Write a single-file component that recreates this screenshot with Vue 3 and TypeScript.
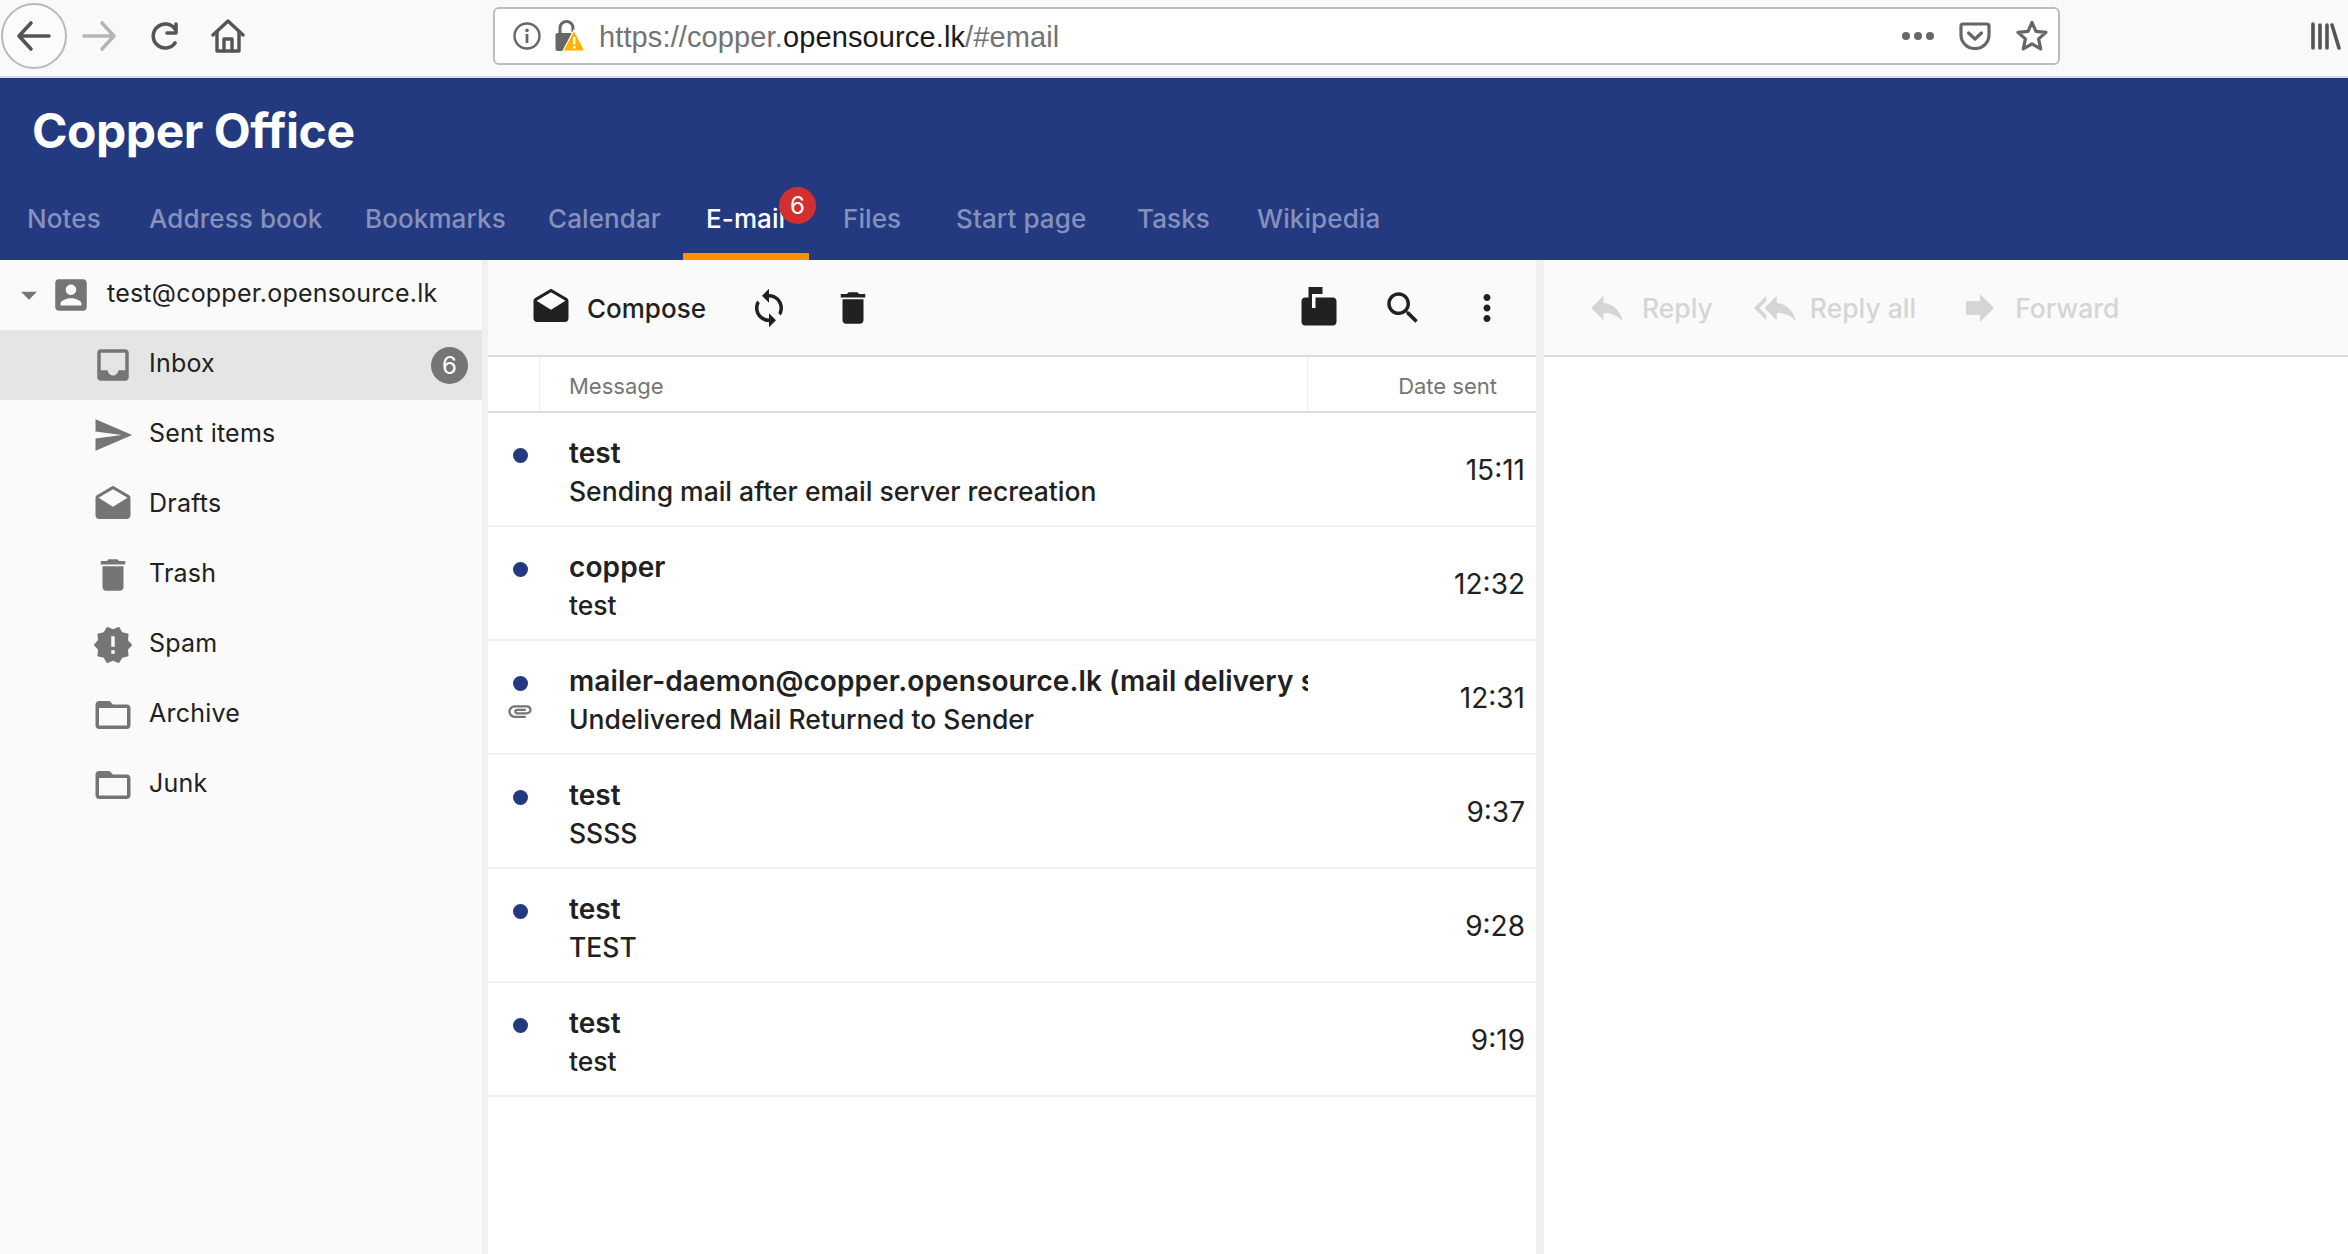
<template>
  <div class="page">
    <!-- browser chrome -->
    <div class="browser-bar">
      <button class="back-btn">
        <svg width="36" height="32" viewBox="0 0 36 32" fill="none" stroke="#555" stroke-width="3.6" stroke-linecap="round" stroke-linejoin="round">
          <path d="M33 16H3M15 3L3 16l12 13" />
        </svg>
      </button>
      <svg class="fwd" width="36" height="32" viewBox="0 0 36 32" fill="none" stroke="#b5b5b5" stroke-width="3.6" stroke-linecap="round" stroke-linejoin="round">
        <path d="M3 16h30M21 3l12 13-12 13" />
      </svg>
      <svg class="reload" width="32" height="28" viewBox="0 0 32 28" fill="none" stroke="#555" stroke-width="3.6" stroke-linecap="round" stroke-linejoin="round">
        <path d="M26 21a12 12 0 1 1 0-14" />
        <path d="M27 2v9h-9" />
      </svg>
      <svg class="home" width="34" height="34" viewBox="0 0 34 34" fill="none" stroke="#555" stroke-width="3.4" stroke-linecap="round" stroke-linejoin="round">
        <path d="M2 16L17 2l15 14" />
        <path d="M6 13v19h22V13" />
        <path d="M13 32V20h8v12" />
      </svg>
      <div class="url-box">
        <svg class="info" width="28" height="28" viewBox="0 0 28 28">
          <circle cx="14" cy="14" r="12.5" fill="none" stroke="#666" stroke-width="2.4" />
          <rect x="12.6" y="12" width="2.8" height="9" fill="#666" />
          <circle cx="14" cy="8.4" r="1.8" fill="#666" />
        </svg>
        <svg class="lock" width="30" height="32" viewBox="0 0 30 32">
          <path d="M5 13V8a6.5 6.5 0 0 1 13 0v4" fill="none" stroke="#666" stroke-width="3" />
          <rect x="0.5" y="13" width="19" height="18" rx="2" fill="#666" />
          <path d="M19 10L30 31H8z" fill="#ffb300" stroke="#fff" stroke-width="1.2" />
          <rect x="18" y="17" width="2.4" height="7.5" fill="#fff" />
          <rect x="18" y="26" width="2.4" height="2.4" fill="#fff" />
        </svg>
        <div class="url-text">https://copper.<span>opensource.lk</span>/#email</div>
        <div class="url-actions">
          <svg width="32" height="10" viewBox="0 0 32 10" fill="#666">
            <circle cx="4" cy="5" r="4" /><circle cx="16" cy="5" r="4" /><circle cx="28" cy="5" r="4" />
          </svg>
          <svg width="32" height="28" viewBox="0 0 32 28" fill="none" stroke="#666" stroke-width="3.2" stroke-linecap="round" stroke-linejoin="round">
            <path d="M4 2h24a2 2 0 0 1 2 2v9a14 13.5 0 0 1-28 0V4a2 2 0 0 1 2-2z" />
            <path d="M9.5 11l6.5 6 6.500-6" />
          </svg>
          <svg width="32" height="32" viewBox="0 0 32 32" fill="none" stroke="#666" stroke-width="3.2" stroke-linejoin="round">
            <path d="M16 2.500l4 8.800 10 1.100-7.400 6.500 2.100 10-8.700-5.100-8.700 5.100 2.100-10L2 12.400l10-1.100z" />
          </svg>
        </div>
      </div>
      <svg class="library" width="30" height="28" viewBox="0 0 30 28" fill="none" stroke="#555" stroke-width="3.6" stroke-linecap="round">
        <path d="M2 2v24M9 3v23M16 3v23M21 3l7 23" />
      </svg>
    </div>

    <!-- app header -->
    <header class="app-header">
      <h1>Copper Office</h1>
      <nav class="tabs">
        <a
          v-for="tab in tabs"
          :key="tab.label"
          class="tab"
          :class="{ active: tab.label === 'E-mail' }"
          :style="{ width: tab.width + 'px' }"
        >
          {{ tab.label }}
          <span v-if="tab.label === 'E-mail'" class="tab-badge">6</span>
        </a>
      </nav>
    </header>

    <div class="workspace">
      <!-- folders -->
      <aside class="sidebar">
        <div class="account">
          <svg class="caret" width="38" height="38" viewBox="0 0 24 24"><path d="M7 10l5 5 5-5z" /></svg>
          <svg class="folder-icon" viewBox="0 0 24 24"><path :d="icons.account" /></svg>
          <span>test@copper.opensource.lk</span>
        </div>
        <div
          v-for="folder in folders"
          :key="folder.name"
          class="folder"
          :class="{ selected: folder.name === 'Inbox' }"
        >
          <svg class="folder-icon" viewBox="0 0 24 24"><path :d="folder.icon" /></svg>
          <span>{{ folder.name }}</span>
          <span v-if="folder.name === 'Inbox'" class="count">6</span>
        </div>
      </aside>

      <!-- message list -->
      <section class="list-pane">
        <div class="toolbar">
          <svg class="tool-icon compose-icon" viewBox="0 0 24 24"><path :d="icons.drafts" /></svg>
          <span class="compose">Compose</span>
          <svg class="tool-icon sync-icon" viewBox="0 0 24 24"><path :d="icons.sync" /></svg>
          <svg class="tool-icon trash-icon" viewBox="0 0 24 24"><path :d="icons.trash" /></svg>
          <svg class="tool-icon mailbox-icon" viewBox="0 0 24 24"><path :d="icons.mailbox" /></svg>
          <svg class="tool-icon search-icon" viewBox="0 0 24 24"><path :d="icons.search" /></svg>
          <svg class="tool-icon more-icon" viewBox="0 0 24 24"><path :d="icons.more" /></svg>
        </div>
        <div class="list-head">
          <div class="col-flag"></div>
          <div class="col-msg">Message</div>
          <div class="col-date">Date sent</div>
        </div>
        <div v-for="(m, i) in messages" :key="i" class="msg-row">
          <div class="flags">
            <span class="dot"></span>
            <svg v-if="m.attachment" class="clip" viewBox="0 0 24 24"><path :d="icons.attachment" /></svg>
          </div>
          <div class="msg-text">
            <div class="from">{{ m.from }}</div>
            <div class="subject">{{ m.subject }}</div>
          </div>
          <div class="time">{{ m.time }}</div>
        </div>
      </section>

      <!-- reading pane -->
      <section class="read-pane">
        <div class="read-toolbar">
          <div class="read-action reply">
            <svg class="tool-icon" viewBox="0 0 24 24"><path :d="icons.reply" /></svg>
            <span>Reply</span>
          </div>
          <div class="read-action reply-all">
            <svg class="tool-icon" viewBox="0 0 24 24"><path :d="icons.replyAll" /></svg>
            <span>Reply all</span>
          </div>
          <div class="read-action forward">
            <svg class="tool-icon" viewBox="0 0 24 24"><path :d="icons.forward" /></svg>
            <span>Forward</span>
          </div>
        </div>
      </section>
    </div>
  </div>
</template>

<script setup lang="ts">
const icons = {
  account:
    "M3 5v14c0 1.1.89 2 2 2h14c1.1 0 2-.9 2-2V5c0-1.1-.9-2-2-2H5c-1.11 0-2 .9-2 2zm12 4c0 1.66-1.34 3-3 3s-3-1.34-3-3 1.34-3 3-3 3 1.34 3 3zm-9 8c0-2 4-3.100 6-3.100s6 1.100 6 3.100v1H6v-1z",
  inbox:
    "M19 3H4.990c-1.110 0-1.980.89-1.980 2L3 19c0 1.100.88 2 1.990 2H19c1.100 0 2-.9 2-2V5c0-1.110-.9-2-2-2zm0 12h-4c0 1.660-1.350 3-3 3s-3-1.340-3-3H4.990V5H19v10z",
  send: "M2.010 21L23 12 2.010 3 2 10l15 2-15 2z",
  drafts:
    "M21.990 8c0-.72-.37-1.350-.94-1.700L12 1 2.950 6.300C2.380 6.650 2 7.280 2 8v10c0 1.100.9 2 2 2h16c1.100 0 2-.9 2-2l-.01-10zM12 13L3.740 7.840 12 3l8.260 4.840L12 13z",
  trash: "M6 19c0 1.100.9 2 2 2h8c1.100 0 2-.9 2-2V7H6v12zM19 4h-3.500l-1-1h-5l-1 1H5v2h14V4z",
  spam: "M23 12l-2.440-2.780.34-3.680-3.610-.82-1.890-3.180L12 3 8.600 1.540 6.710 4.720l-3.610.81.34 3.680L1 12l2.440 2.780-.34 3.690 3.610.82 1.890 3.180L12 21l3.400 1.460 1.890-3.180 3.610-.82-.34-3.680L23 12zm-10 5h-2v-2h2v2zm0-4h-2V7h2v6z",
  folder:
    "M20 6h-8l-2-2H4c-1.100 0-1.990.9-1.990 2L2 18c0 1.100.9 2 2 2h16c1.100 0 2-.9 2-2V8c0-1.100-.9-2-2-2zm0 12H4V8h16v10z",
  sync: "M12 4V1L8 5l4 4V6c3.310 0 6 2.690 6 6 0 1.010-.25 1.970-.7 2.800l1.460 1.460C19.540 15.030 20 13.570 20 12c0-4.420-3.580-8-8-8zm0 14c-3.310 0-6-2.690-6-6 0-1.010.25-1.970.7-2.800L5.240 7.740C4.460 8.970 4 10.430 4 12c0 4.420 3.580 8 8 8v3l4-4-4-4v3z",
  mailbox: "M20 6H10v6H8V4h6V0H6v6H4c-1.100 0-2 .9-2 2v12c0 1.100.9 2 2 2h16c1.100 0 2-.9 2-2V8c0-1.100-.9-2-2-2z",
  search:
    "M15.500 14h-.79l-.28-.27C15.410 12.590 16 11.110 16 9.500 16 5.910 13.090 3 9.500 3S3 5.910 3 9.500 5.910 16 9.500 16c1.610 0 3.090-.59 4.230-1.570l.27.28v.79l5 4.990L20.490 19l-4.990-5zm-6 0C7.010 14 5 11.990 5 9.500S7.010 5 9.500 5 14 7.010 14 9.500 11.990 14 9.500 14z",
  more: "M12 8c1.100 0 2-.9 2-2s-.9-2-2-2-2 .9-2 2 .9 2 2 2zm0 2c-1.100 0-2 .9-2 2s.9 2 2 2 2-.9 2-2-.9-2-2-2zm0 6c-1.100 0-2 .9-2 2s.9 2 2 2 2-.9 2-2-.9-2-2-2z",
  reply: "M10 9V5l-7 7 7 7v-4.100c5 0 8.500 1.600 11 5.100-1-5-4-10-11-11z",
  replyAll: "M7 8V5l-7 7 7 7v-3l-4-4 4-4zm6 1V5l-7 7 7 7v-4.100c5 0 8.500 1.600 11 5.100-1-5-4-10-11-11z",
  forward: "M12 8V4l8 8-8 8v-4H4V8z",
  attachment:
    "M2 12.500C2 9.460 4.460 7 7.500 7H18c2.210 0 4 1.790 4 4s-1.790 4-4 4H9.500C8.120 15 7 13.880 7 12.500S8.120 10 9.500 10H17v2H9.410c-.55 0-.55 1 0 1H18c1.100 0 2-.9 2-2s-.9-2-2-2H7.500C5.570 9 4 10.570 4 12.500S5.570 16 7.500 16H17v2H7.500C4.460 18 2 15.540 2 12.500z",
};

const tabs = [
  { label: "Notes", width: 122 },
  { label: "Address book", width: 216 },
  { label: "Bookmarks", width: 183 },
  { label: "Calendar", width: 158 },
  { label: "E-mail", width: 137 },
  { label: "Files", width: 113 },
  { label: "Start page", width: 181 },
  { label: "Tasks", width: 120 },
  { label: "Wikipedia", width: 160 },
];

const folders = [
  { name: "Inbox", icon: icons.inbox },
  { name: "Sent items", icon: icons.send },
  { name: "Drafts", icon: icons.drafts },
  { name: "Trash", icon: icons.trash },
  { name: "Spam", icon: icons.spam },
  { name: "Archive", icon: icons.folder },
  { name: "Junk", icon: icons.folder },
];

const messages = [
  { from: "test", subject: "Sending mail after email server recreation", time: "15:11" },
  { from: "copper", subject: "test", time: "12:32" },
  {
    from: "mailer-daemon@copper.opensource.lk (mail delivery system)",
    subject: "Undelivered Mail Returned to Sender",
    time: "12:31",
    attachment: true,
  },
  { from: "test", subject: "SSSS", time: "9:37" },
  { from: "test", subject: "TEST", time: "9:28" },
  { from: "test", subject: "test", time: "9:19" },
];
</script>

<style scoped>
.page {
  width: 2348px;
  height: 1254px;
  overflow: hidden;
  display: flex;
  flex-direction: column;
  background: #fff;
  font-family: Inter, "Noto Sans", sans-serif;
  color: #212121;
}

/* browser bar */
.browser-bar {
  height: 78px;
  box-sizing: border-box;
  flex-shrink: 0;
  display: flex;
  align-items: center;
  background: #f9f9fa;
  border-bottom: 2px solid #dcdcdc;
  padding: 0 0 4px 1px;
}

.back-btn {
  width: 66px;
  height: 66px;
  flex-shrink: 0;
  padding: 0;
  border: 2px solid #b8b8b8;
  border-radius: 50%;
  background: #fbfbfb;
  display: flex;
  align-items: center;
  justify-content: center;
}

.fwd {
  margin-left: 14px;
}

.reload {
  margin-left: 32px;
}

.home {
  margin-left: 30px;
}

.url-box {
  width: 1567px;
  height: 58px;
  box-sizing: border-box;
  margin-left: 248px;
  display: flex;
  align-items: center;
  padding: 0 10px 0 18px;
  background: #fff;
  border: 2px solid #bdbdbd;
  border-radius: 6px;
}

.lock {
  margin-left: 14px;
}

.url-text {
  margin: 2px 0 0 14px;
  font-family: "Liberation Sans", sans-serif;
  font-size: 29px;
  letter-spacing: 0.12px;
  color: #737373;
}

.url-text span {
  color: #1a1a1a;
}

.url-actions {
  margin-left: auto;
  display: flex;
  align-items: center;
  gap: 25px;
}

.library {
  margin-left: 251px;
}

/* app header */
.app-header {
  height: 182px;
  flex-shrink: 0;
  display: flex;
  flex-direction: column;
  background: #233a80;
  color: #fff;
}

.app-header h1 {
  margin: 0;
  padding: 24px 0 0 32px;
  height: 74px;
  font-size: 48px;
  line-height: 58px;
  font-weight: 700;
  letter-spacing: -0.45px;
}

.tabs {
  display: flex;
  margin-top: auto;
  padding-left: 4px;
}

.tab {
  position: relative;
  height: 84px;
  box-sizing: border-box;
  padding-left: 23px;
  display: flex;
  align-items: center;
  font-size: 26px;
  font-weight: 500;
  letter-spacing: 0.1px;
  white-space: nowrap;
  color: #8690bc;
}

.tab.active {
  color: #fff;
}

.tab.active::after {
  content: "";
  position: absolute;
  left: 0;
  bottom: 0;
  width: 126px;
  height: 7px;
  background: #ff9100;
}

.tab-badge {
  position: absolute;
  left: 96px;
  top: 11px;
  width: 37px;
  height: 37px;
  border-radius: 50%;
  background: #d32f2f;
  color: #fff;
  font-size: 24px;
  font-weight: 400;
  line-height: 37px;
  text-align: center;
}

/* layout */
.workspace {
  flex: 1;
  display: flex;
  min-height: 0;
}

/* sidebar */
.sidebar {
  width: 488px;
  box-sizing: border-box;
  flex-shrink: 0;
  background: #fafafa;
  border-right: 6px solid #f0f0f0;
  font-size: 25px;
}

.account,
.folder {
  height: 70px;
  display: flex;
  align-items: center;
}

.account {
  padding-left: 10px;
}

.account span {
  margin: 0 0 4px 15px;
  letter-spacing: 0.22px;
}

.caret {
  fill: #757575;
}

.folder-icon {
  width: 42px;
  height: 42px;
  flex-shrink: 0;
  fill: #757575;
}

.account .folder-icon {
  margin-left: 2px;
}

.folder {
  padding-left: 92px;
  position: relative;
}

.folder > span:first-of-type {
  margin: 0 0 4px 15px;
  letter-spacing: 0.22px;
}

.folder.selected {
  background: #e5e5e5;
}

.count {
  position: absolute;
  right: 14px;
  top: 17px;
  width: 37px;
  height: 37px;
  border-radius: 50%;
  background: #757575;
  color: #fff;
  font-size: 24px;
  line-height: 37px;
  text-align: center;
}

/* message list */
.list-pane {
  width: 1048px;
  flex-shrink: 0;
  background: #fff;
}

.toolbar,
.read-toolbar {
  height: 97px;
  box-sizing: border-box;
  display: flex;
  align-items: center;
  background: #fafafa;
  border-bottom: 2px solid #dcdcdc;
}

.tool-icon {
  width: 42px;
  height: 42px;
  flex-shrink: 0;
  fill: #212121;
}

.compose-icon {
  margin-left: 42px;
}

.compose {
  margin-left: 15px;
  padding-top: 2px;
  font-size: 26px;
  font-weight: 500;
}

.sync-icon {
  margin-left: 42px;
}

.trash-icon {
  margin-left: 42px;
}

.mailbox-icon {
  margin-left: auto;
}

.search-icon {
  margin-left: 42px;
}

.more-icon {
  margin-left: 42px;
  margin-right: 28px;
}

.list-head {
  height: 56px;
  box-sizing: border-box;
  display: flex;
  border-bottom: 2px solid #dcdcdc;
  font-size: 22px;
  color: #757575;
}

.col-flag {
  width: 52px;
  box-sizing: border-box;
  border-right: 1px solid #eee;
}

.col-msg,
.col-date {
  display: flex;
  align-items: center;
  padding-top: 3px;
}

.col-msg {
  width: 768px;
  box-sizing: border-box;
  padding-left: 29px;
  border-right: 1px solid #eee;
}

.col-date {
  width: 228px;
  box-sizing: border-box;
  justify-content: flex-end;
  padding-right: 39px;
}

.msg-row {
  height: 114px;
  box-sizing: border-box;
  display: flex;
  border-bottom: 2px solid #f2f2f2;
}

.flags {
  width: 52px;
  flex-shrink: 0;
  padding-top: 35px;
  box-sizing: border-box;
  display: flex;
  flex-direction: column;
  align-items: center;
  position: relative;
}

.dot {
  width: 15px;
  height: 15px;
  margin-left: 12px;
  border-radius: 50%;
  background: #233a80;
}

.clip {
  width: 28px;
  height: 28px;
  margin-left: 12px;
  margin-top: 6px;
  fill: #757575;
}

.msg-text {
  width: 768px;
  flex-shrink: 0;
  box-sizing: border-box;
  padding: 22px 0 0 29px;
  overflow: hidden;
  white-space: nowrap;
  font-size: 26.5px;
  font-weight: 500;
}

.from {
  line-height: 37px;
  font-size: 28px;
  font-weight: 600;
  letter-spacing: 0.1px;
}

.subject {
  line-height: 38px;
}

.time {
  width: 217px;
  flex-shrink: 0;
  display: flex;
  align-items: center;
  justify-content: flex-end;
  padding-top: 2px;
  box-sizing: border-box;
  font-size: 28px;
}

/* reading pane */
.read-pane {
  flex: 1;
  border-left: 8px solid #f0f0f0;
  background: #fff;
}

.read-action {
  display: flex;
  align-items: center;
  color: #d5d5d5;
  font-size: 26.5px;
  font-weight: 500;
}

.read-action .tool-icon {
  fill: #d5d5d5;
}

.read-action span {
  margin-left: 14px;
}

.reply {
  margin-left: 42px;
}

.reply-all {
  margin-left: 41px;
}

.forward {
  margin-left: 43px;
}
</style>

<style>
html,
body {
  margin: 0;
  background: #fff;
}
</style>
